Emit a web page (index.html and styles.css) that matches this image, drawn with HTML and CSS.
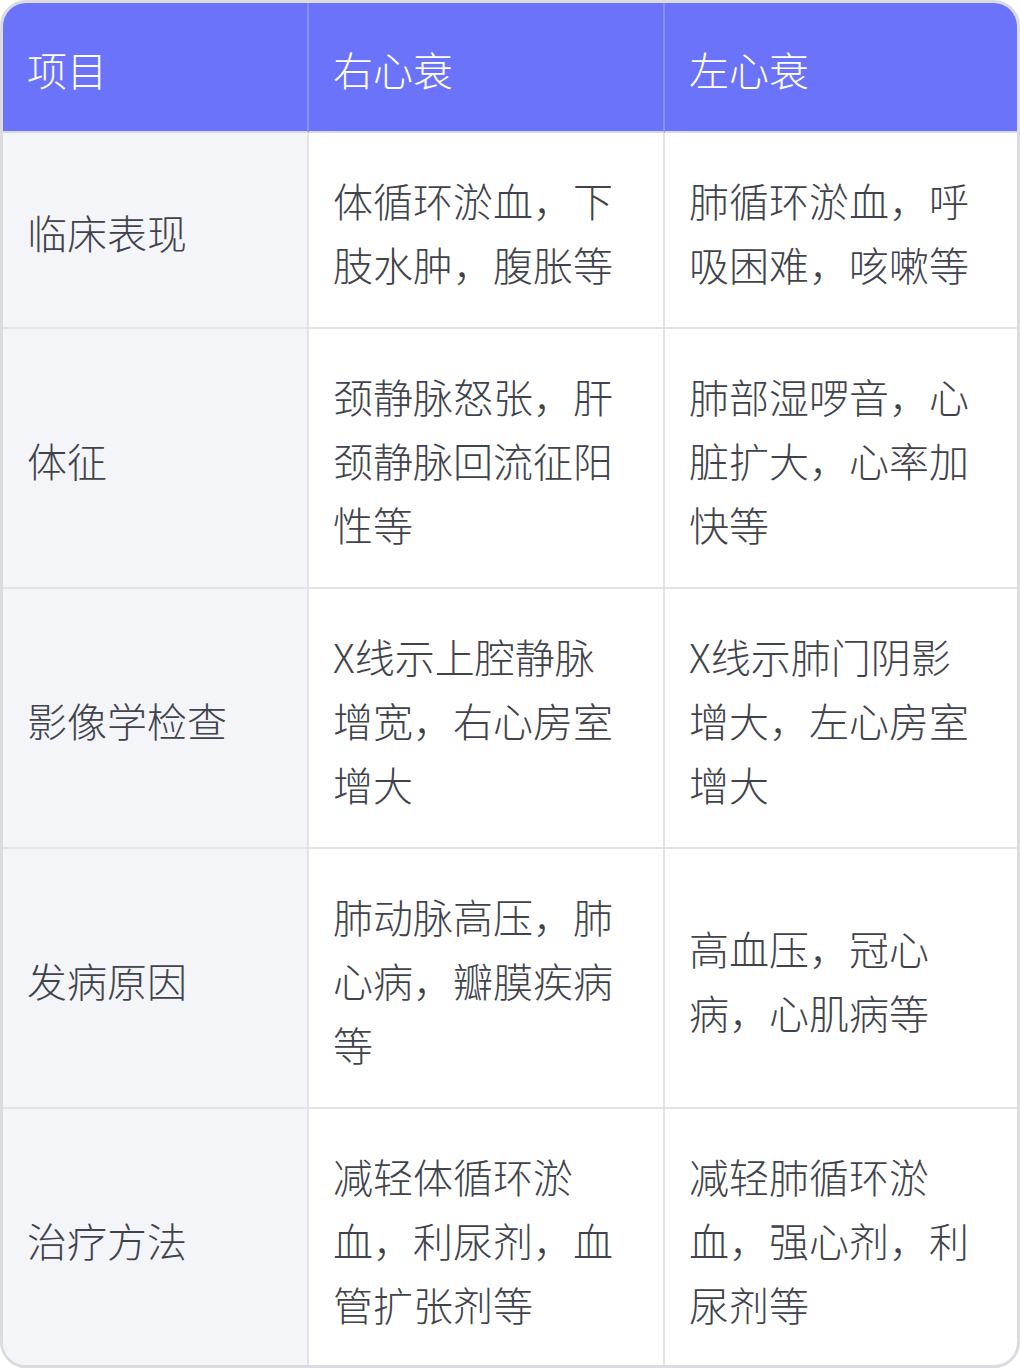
FILE: index.html
```html
<!DOCTYPE html>
<html lang="zh-CN">
<head>
<meta charset="utf-8">
<title>右心衰与左心衰对比</title>
<link rel="stylesheet" href="styles.css">
</head>
<body>
<div class="wrap">
  <table class="cmp">
    <colgroup>
      <col class="c1">
      <col class="c2">
      <col class="c3">
    </colgroup>
    <thead>
      <tr>
        <th>项目</th>
        <th>右心衰</th>
        <th class="last">左心衰</th>
      </tr>
    </thead>
    <tbody>
      <tr>
        <td class="label">临床表现</td>
        <td>体循环淤血，下<br>肢水肿，腹胀等</td>
        <td class="last">肺循环淤血，呼<br>吸困难，咳嗽等</td>
      </tr>
      <tr>
        <td class="label">体征</td>
        <td>颈静脉怒张，肝<br>颈静脉回流征阳<br>性等</td>
        <td class="last">肺部湿啰音，心<br>脏扩大，心率加<br>快等</td>
      </tr>
      <tr>
        <td class="label">影像学检查</td>
        <td>X线示上腔静脉<br>增宽，右心房室<br>增大</td>
        <td class="last">X线示肺门阴影<br>增大，左心房室<br>增大</td>
      </tr>
      <tr>
        <td class="label">发病原因</td>
        <td>肺动脉高压，肺<br>心病，瓣膜疾病<br>等</td>
        <td class="last">高血压，冠心<br>病，心肌病等</td>
      </tr>
      <tr class="end">
        <td class="label">治疗方法</td>
        <td>减轻体循环淤<br>血，利尿剂，血<br>管扩张剂等</td>
        <td class="last">减轻肺循环淤<br>血，强心剂，利<br>尿剂等</td>
      </tr>
    </tbody>
  </table>
</div>
</body>
</html>
```

FILE: styles.css
```css
html, body {
  margin: 0;
  padding: 0;
  background: #ffffff;
}

.wrap {
  width: 1020px;
  height: 1368px;
  box-sizing: border-box;
  border: 3px solid #dcdce0;
  border-radius: 26px;
  overflow: hidden;
  background: #ffffff;
}

.cmp {
  width: 1014px;
  border-collapse: separate;
  border-spacing: 0;
  table-layout: fixed;
  font-family: "Noto Sans CJK SC", "Noto Sans", sans-serif;
  font-weight: 300;
  font-size: 40px;
  line-height: 64px;
  color: #41434c;
}

.c1 { width: 306px; }
.c2 { width: 356px; }
.c3 { width: 352px; }

.cmp th {
  background: #6c73fb;
  color: #ffffff;
  font-weight: 300;
  text-align: left;
  padding: 34px 23px 30px 24px;
  border-right: 2px solid #8a90fb;
  border-bottom: 2px solid #d7d8e8;
}

.cmp td {
  padding: 35px 23px 31px 24px;
  vertical-align: middle;
  border-right: 2px solid #e3e3e7;
  border-bottom: 2px solid #e3e3e7;
  white-space: nowrap;
}

.cmp th.last,
.cmp td.last {
  border-right: none;
}

.cmp td.label {
  background: #f4f5f9;
}

.cmp tr.end td {
  border-bottom: none;
}
```
